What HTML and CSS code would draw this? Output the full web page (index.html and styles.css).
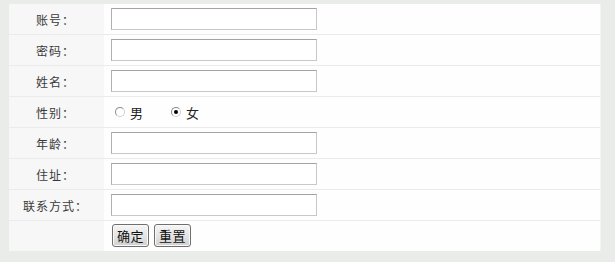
FILE: index.html
```html
<!DOCTYPE html>
<html lang="zh">
<head>
<meta charset="utf-8">
<link rel="stylesheet" href="styles.css">
</head>
<body>
<form class="form">
  <div class="row"><div class="label">账号：</div><div class="value"><input class="text" type="text"></div></div>
  <div class="row"><div class="label">密码：</div><div class="value"><input class="text" type="password"></div></div>
  <div class="row"><div class="label">姓名：</div><div class="value"><input class="text" type="text"></div></div>
  <div class="row"><div class="label">性别：</div><div class="value radios">
    <label class="opt"><input class="radio" type="radio" name="sex">男</label>
    <label class="opt"><input class="radio" type="radio" name="sex" checked>女</label>
  </div></div>
  <div class="row"><div class="label">年龄：</div><div class="value"><input class="text" type="text"></div></div>
  <div class="row"><div class="label">住址：</div><div class="value"><input class="text" type="text"></div></div>
  <div class="row"><div class="label">联系方式：</div><div class="value"><input class="text" type="text"></div></div>
  <div class="row last"><div class="label"></div><div class="value buttons">
    <button class="btn" type="button">确定</button>
    <button class="btn" type="button">重置</button>
  </div></div>
</form>
</body>
</html>
```
FILE: styles.css
```css
html, body {
  margin: 0;
  padding: 0;
  background: #e9ece8;
  font-family: "Noto Sans CJK SC", "Noto Sans", sans-serif;
  font-size: 12px;
  color: #3a3a3a;
}
body {
  padding: 4px 0 0 9px;
  width: 615px;
  height: 262px;
  box-sizing: border-box;
}
.form {
  width: 592px;
  background: #fdfefd;
  border-right: 1px solid #f2f3f2;
  box-sizing: border-box;
}
.row {
  display: grid;
  grid-template-columns: 95px 1fr;
  height: 31px;
  border-bottom: 1px solid #ebebeb;
  box-sizing: border-box;
}
.row.last {
  height: 30px;
  border-bottom: none;
}
.label {
  background: #f7f7f7;
  display: flex;
  align-items: center;
  justify-content: center;
  padding-right: 2px;
  letter-spacing: 1px;
}
.value {
  display: flex;
  align-items: center;
  padding-left: 7px;
}
.text {
  width: 206px;
  height: 22px;
  box-sizing: border-box;
  margin: 0;
  border: 1px solid #c8c8c8;
  border-top-color: #a3a3a3;
  border-left-color: #b0b0b0;
  background: #fff;
  padding: 0 3px;
  font: inherit;
}
.radios {
  padding-left: 11px;
  gap: 28px;
}
.opt {
  display: flex;
  align-items: center;
  gap: 5px;
  font-size: 13px;
  color: #222;
}
.radio {
  appearance: none;
  -webkit-appearance: none;
  margin: 0;
  width: 10px;
  height: 10px;
  border-radius: 50%;
  border: 1px solid #8a8a8a;
  border-right-color: #d0d0d0;
  border-bottom-color: #d0d0d0;
  background: #fff;
  box-sizing: border-box;
  position: relative;
}
.radio:checked::after {
  content: "";
  position: absolute;
  left: 2px;
  top: 2px;
  width: 4px;
  height: 4px;
  border-radius: 50%;
  background: #000;
}
.buttons {
  padding-left: 8px;
  padding-bottom: 1px;
  gap: 5px;
}
.btn {
  margin: 0;
  height: 23px;
  width: 37px;
  padding: 0;
  border: 1px solid #6f6f6f;
  border-radius: 3px;
  background: linear-gradient(#f6f6f6, #dedede 70%, #cfcfcf);
  font-family: "Noto Sans CJK SC", sans-serif;
  font-size: 13px;
  color: #111;
  letter-spacing: 0.5px;
  box-shadow: inset 0 0 0 1px #fafafa;
}
```
